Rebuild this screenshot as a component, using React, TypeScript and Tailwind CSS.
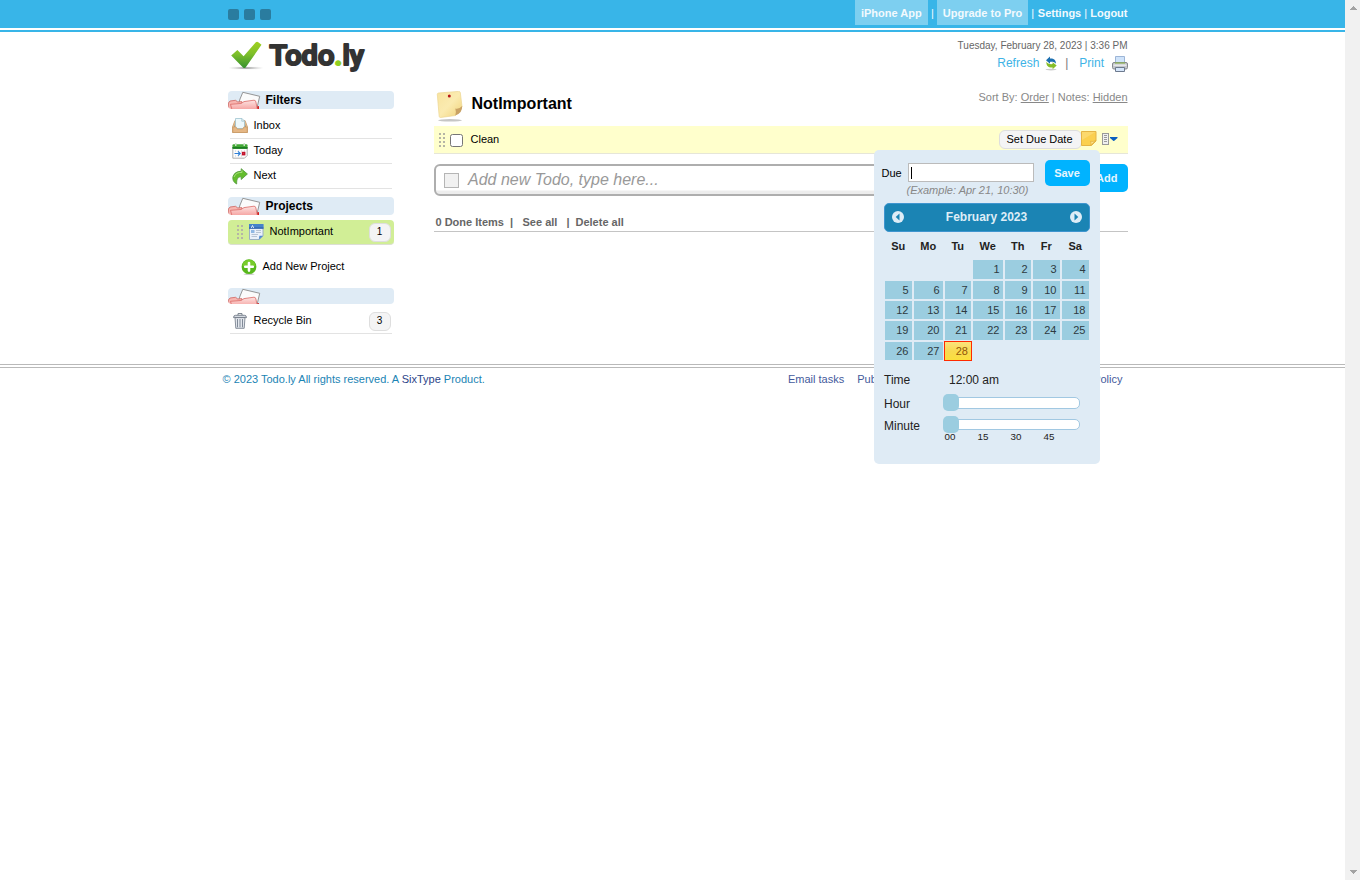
import React from "react";

const FONT = "font-['Liberation_Sans',Arial,sans-serif]";

function Logo() {
  return (
    <svg width="140" height="40" viewBox="0 0 140 40">
      <defs>
        <linearGradient id="chk" x1="0" y1="0" x2="0" y2="1">
          <stop offset="0" stopColor="#a0d01f" />
          <stop offset="0.45" stopColor="#7fc02a" />
          <stop offset="1" stopColor="#35902e" />
        </linearGradient>
        <radialGradient id="shd">
          <stop offset="0" stopColor="#777" />
          <stop offset="1" stopColor="#ddd" stopOpacity="0.2" />
        </radialGradient>
      </defs>
      <ellipse cx="18" cy="28" rx="17" ry="1.6" fill="url(#shd)" />
      <path d="M3.2 15.5 9.4 10l6.200 6.200L27.6 2.400Q29 1.400 30.300 2.200l3.200 2.600L17.800 27.200Q16.400 28.800 15 27.400Z" fill="url(#chk)" />
      <text x="41.500" y="25.400" textLength="94.500" lengthAdjust="spacingAndGlyphs" fontFamily="Roboto" fontWeight="500" fontSize="28" fill="#333" stroke="#333" strokeWidth="2.200" strokeLinejoin="round">
        Todo<tspan fill="#8fd021" stroke="#8fd021">.</tspan>ly
      </text>
    </svg>
  );
}

function Folder({ h }: { h: number }) {
  return (
    <svg width="34" height={h} viewBox={`0 0 34 ${h}`} className="shrink-0">
      <defs>
        <linearGradient id="fold" x1="0" y1="9" x2="0" y2="19" gradientUnits="userSpaceOnUse">
          <stop offset="0" stopColor="#fde6e4" />
          <stop offset="1" stopColor="#f5a09e" />
        </linearGradient>
      </defs>
      <path d="M14.800 1.300 31.700 5.300 28.500 19H9L12 8Z" fill="#fbfbfb" stroke="#8a8a8a" strokeWidth=".9" />
      <path d="M28.200 15.800 31 15v4h-3Z" fill="#d32020" />
      <path d="M.4 19v-7l1.600-2 5.500-.7 2.300 1.700 4-.4v9Z" fill="#f7b5b0" stroke="#cf6560" strokeWidth=".8" />
      <path d="M4 19 2.500 13.300l10.500-.8 3-1.900 10-1.400q1.600 0 1.900 1.800L29.500 19Z" fill="url(#fold)" stroke="#da6a66" strokeWidth=".8" />
    </svg>
  );
}

function Grip() {
  return (
    <svg width="7" height="15" viewBox="0 0 7 15" fill="#b5b5a6" shapeRendering="crispEdges" className="shrink-0">
      {[0, 4, 8, 12].map((y) => (
        <g key={y}>
          <rect x="0" y={y} width="2" height="2" />
          <rect x="4" y={y} width="2" height="2" />
        </g>
      ))}
    </svg>
  );
}

function InboxIcon() {
  return (
    <svg width="16" height="16" viewBox="0 0 16 16">
      <path d="M3 2.500h10l2.500 6.500v5.500H.5V9Z" fill="#e6c296" stroke="#c79a68" strokeWidth=".8" />
      <path d="M3.500 3.500h9L14 9.500H2Z" fill="#a58e70" />
      <path d="M3.500.5H10L12.500 3v7.500h-9Z" fill="#edf8fb" stroke="#9fc4cf" strokeWidth=".8" />
      <path d="M9.800.5V3.200h2.700" fill="none" stroke="#9fc4cf" strokeWidth=".8" />
      <path d="M.8 9h3.400l1 2h5.600l1-2h3.400v5.500H.8Z" fill="#e5b785" stroke="#c2935e" strokeWidth=".6" />
    </svg>
  );
}

function TodayIcon() {
  return (
    <svg width="16" height="16" viewBox="0 0 16 16">
      <path d="M.8 4h14.400v8.500L12.500 15.200H.8Z" fill="#fdfdfd" stroke="#9a9a9a" strokeWidth=".8" />
      <rect x=".5" y="1.300" width="15" height="4.500" rx="1" fill="#42a835" />
      <rect x=".5" y="4" width="15" height="1.800" fill="#1c7d22" />
      <path d="M3 0h1.500v3H3ZM11.500 0H13v3h-1.500Z" fill="#c9dfc7" />
      <path d="M3 8h1M6 8h1M9 8h1M12 8h1M3 13h1M6 13h1M9 13h1" stroke="#ccc" />
      <path d="M2.500 10.500h5.500M6 8.300l2.200 2.200L6 12.700" fill="none" stroke="#2f7fd6" strokeWidth="1.200" />
      <rect x="10.500" y="9.500" width="2.200" height="2.200" fill="#fff" stroke="#c3132c" strokeWidth="1.400" />
    </svg>
  );
}

function NextIcon() {
  return (
    <svg width="16" height="17" viewBox="0 0 16 17">
      <path d="M9.200.7 15.400 6 9.200 11.500V8.800C6.500 8.700 4.300 10.500 4.700 16 1.500 14.500.4 11.500.9 8.800 1.800 5.200 5 3.200 9.200 3.300Z" fill="#64bd2d" stroke="#4f9638" strokeWidth=".8" />
      <path d="M10 2.500v1.900C6.300 4.200 3.300 5.500 2 9" fill="none" stroke="#a8e07c" strokeWidth="1" />
    </svg>
  );
}

function DocIcon() {
  return (
    <svg width="15" height="16" viewBox="0 0 15 16">
      <path d="M.5.5H14V12l-3.500 3.500H.5Z" fill="#eaf1fa" stroke="#94a9c2" strokeWidth=".9" />
      <rect x="0" y="0" width="14.500" height="4.500" fill="#4583cb" />
      <rect x="0" y="3.500" width="14.500" height="1.200" fill="#2c5fa8" />
      <path d="M2.300 4 3.500 1.500 4.700 4" fill="none" stroke="#fff" strokeWidth=".8" />
      <path d="M7 6.500h5M7 8.500h5M2.500 10.500H9M2.500 12.500H8" stroke="#b7c4d4" />
      <rect x="2" y="6" width="3.500" height="3" fill="#8fb8e4" />
      <path d="m9.800 15.500.6-3.800 3.600.1Z" fill="#4a87cc" />
    </svg>
  );
}

function PlusIcon() {
  return (
    <svg width="16" height="16" viewBox="0 0 16 16">
      <ellipse cx="8" cy="15.200" rx="5.500" ry=".8" fill="#ccc" />
      <circle cx="8" cy="7.700" r="7.400" fill="#58b81c" />
      <path d="M1.500 7a6.500 6.300 0 0 1 13 0Q8 9 1.500 7Z" fill="#79cc2b" />
      <path d="M8 4v7.600M4.200 7.800h7.600" stroke="#fff" strokeWidth="2.600" strokeLinecap="round" />
    </svg>
  );
}

function TrashIcon() {
  return (
    <svg width="14" height="16" viewBox="0 0 14 16">
      <path d="M2 4.500h10l-.8 10.800H2.800Z" fill="#e3e7ed" stroke="#6c7684" strokeWidth=".8" />
      <path d="M4.500 6v8.300M7 6v8.300M9.500 6v8.300" stroke="#808a98" strokeWidth="1" />
      <path d="M.5 4.600Q.5 2.300 2.500 2.300h9q2 0 2 2.300Z" fill="#d5dae1" stroke="#67707d" strokeWidth=".8" />
      <path d="M5 2V.6h4V2" fill="none" stroke="#67707d" strokeWidth=".9" />
    </svg>
  );
}

function StickyIcon() {
  return (
    <svg width="28" height="31" viewBox="0 0 28 31">
      <defs>
        <linearGradient id="stk" x1="0" y1="0" x2="1" y2="1">
          <stop offset="0" stopColor="#f8e39f" />
          <stop offset="0.5" stopColor="#fbebb0" />
          <stop offset="1" stopColor="#f0d27a" />
        </linearGradient>
      </defs>
      <ellipse cx="14" cy="29.300" rx="12" ry="1.200" fill="#c6c6c6" />
      <path d="M1.300 3.500Q1.200 2.300 2.500 2L22.500.4Q24 .3 24.300 1.500L26 15.500 19.500 24.500 4.500 26.500Q3.400 26.500 3.200 25.500Z" fill="url(#stk)" stroke="#ecd590" strokeWidth=".7" />
      <path d="M19.300 24.600Q20.500 21 19.300 17.500 23 18.500 26.200 15 26.500 22 19.300 24.600Z" fill="#c9a264" />
      <circle cx="13.300" cy="5" r="1.500" fill="#b81818" />
    </svg>
  );
}

function RefreshIcon() {
  return (
    <svg width="13" height="15" viewBox="0 0 13 15">
      <ellipse cx="6" cy="13.600" rx="5.500" ry=".8" fill="#ccc" />
      <path d="M1 4.200 5 .6v1.900c3.700-.3 6 1.600 6 5.200C9.500 6 8 5.700 5 5.900v1.900Z" fill="#1c6fb0" />
      <path d="M11.700 9.500 7.600 6.200v1.900C4.500 8.400 2.200 7.500 1.500 5.500c-.6 4.200 2 6.300 6.100 6v1.700Z" fill="#86bd27" />
    </svg>
  );
}

function PrintIcon() {
  return (
    <svg width="16" height="16" viewBox="0 0 16 16">
      <path d="M3.500 7.500V.5h9v7Z" fill="#cfe3fa" stroke="#9db5d6" />
      <rect x=".5" y="6.500" width="15" height="6.500" rx="1.500" fill="#c5c7cb" stroke="#85888e" />
      <path d="M3 7h10" stroke="#8db552" strokeWidth="1.200" />
      <path d="M1.500 9.200h13" stroke="#ededf0" strokeWidth="1.300" />
      <path d="M3.500 11.500h9v4h-9Z" fill="#d6e6fa" stroke="#6d7a8e" />
    </svg>
  );
}

function NoteIcon() {
  return (
    <svg width="16" height="15" viewBox="0 0 16 15">
      <path d="M.5.5h14.500v9.500L10.500 14.500H.5Z" fill="#fbd04e" stroke="#e5b545" />
      <path d="M1 1h13.500L1 9Z" fill="#fde28a" opacity=".5" />
      <path d="M9.800 14.300Q10.500 12 9.500 10.200 12 11 14.800 9.500Z" fill="#fde48e" stroke="#e0ae3c" strokeWidth=".7" />
    </svg>
  );
}

function MenuIcon() {
  return (
    <svg width="16" height="13" viewBox="0 0 16 13">
      <rect x=".5" y=".5" width="6" height="11" fill="#f0f0f0" stroke="#999" />
      <path d="M2 2.500h3M2 4.500h3M2 6.500h3M2 8.500h3" stroke="#999" />
      <path d="M8 4h7.500v1L12 8h-.5L8 5Z" fill="#0a5fc0" />
    </svg>
  );
}

function NavCircle({ left }: { left?: boolean }) {
  return (
    <svg width="12" height="12" viewBox="0 0 12 12" className="-mt-px">
      <circle cx="6" cy="6" r="6" fill="#deedf7" />
      <path d={left ? "M7.500 2.500v7L3.700 6Z" : "M4.500 2.500v7L8.300 6Z"} fill="#1b84b4" />
    </svg>
  );
}

function SectionHead({ title, h }: { title?: string; h: 16 | 18 }) {
  return (
    <div className={`flex w-[166px] overflow-hidden rounded-[4px] bg-[#dfebf5] ${h === 16 ? "h-4" : "h-[18px]"}`}>
      <Folder h={h} />
      <span className="ml-[3.5px] text-[12px] leading-[18px] font-bold text-black">{title}</span>
    </div>
  );
}

function Item({ icon, label, count }: { icon: React.ReactNode; label: string; count?: number }) {
  return (
    <div className="ml-0.5 flex h-[25px] w-[162px] border-b border-[#e3e3e3]">
      <span className="mt-1 flex h-4 w-[23.5px] pl-0.5">{icon}</span>
      <span className="leading-[22px]">{label}</span>
      {count !== undefined && <Badge n={count} />}
    </div>
  );
}

function Badge({ n }: { n: number }) {
  return (
    <span className="mt-[3px] ml-auto mr-px h-[19px] w-[22px] rounded-[6px] border border-[#dedede] bg-[#f4f4f5] pr-px text-center text-[10px] leading-[15px]">{n}</span>
  );
}

const DAYS = Array.from({ length: 28 }, (_, i) => i + 1);

function Slider({ short }: { short?: boolean }) {
  return (
    <div className="flex h-[17px] w-[137px]">
      <div className="z-10 h-[17px] w-4 shrink-0 rounded-[5px] bg-[#9bcde0]" />
      <div className={`mt-[3px] -ml-1 flex-1 rounded-r-[5px] border border-[#a1c8e2] bg-white ${short ? "h-[11px]" : "h-3"}`} />
    </div>
  );
}

function DuePopup() {
  return (
    <div className="absolute top-[24px] left-[440px] z-20 h-[314px] w-[226px] rounded-[5px] bg-[#dfebf5] text-[#222]">
      <div className="flex h-[36px] pt-[10px] pl-[7.5px] text-black">
        <span className="w-[26.500px] leading-[27px]">Due</span>
        <div className="mt-[3px] flex h-[19px] w-[126px] items-center border border-[#bbb] bg-white pl-0.5">
          <span className="h-3 w-px bg-black" />
        </div>
        <div className="ml-[11px] h-[26px] w-[45px] rounded-[5px] bg-[#00b3ff] pr-px text-center leading-[26px] font-bold text-[#e6f5fd]">Save</div>
      </div>
      <div className="-mt-[3px] pl-[32.500px] leading-[14px] text-[#888] italic">(Example: Apr 21, 10:30)</div>
      <div className="mt-[6px] ml-[10px] flex h-[29px] w-[206px] items-center justify-between rounded-[5px] border border-[#3f95cf] bg-[#1b84b4] px-[7px] text-[12px] font-bold text-[#deedf7]">
        <NavCircle left />
        <span className="-mt-px pr-px">February 2023</span>
        <NavCircle />
      </div>
      <div className="ml-[11px] grid h-7 grid-cols-[27px_29px_26px_30px_26px_27px_27px] gap-x-0.5 text-center leading-[28px] font-bold">
        {["Su", "Mo", "Tu", "We", "Th", "Fr", "Sa"].map((d) => (
          <span key={d} className="pr-[0.500px]">{d}</span>
        ))}
      </div>
      <div className="ml-[11px] grid grid-cols-[27px_29px_26px_30px_26px_27px_27px] grid-rows-[19px_18px_18px_19px_18px] gap-0.5 text-right leading-[18px] text-[#2e3a40]">
        <span className="col-span-3" />
        {DAYS.map((d) => (
          <span
            key={d}
            className={
              d === 28
                ? "-m-px border border-[#ff2a00] bg-linear-to-b from-[#fbe37d] via-[#f8da50] to-[#fbdf3c] pr-[3px] text-[#915608]"
                : "bg-[#9bcde0] pr-[3.500px]"
            }
          >
            {d}
          </span>
        ))}
      </div>
      <div className="mt-[11px] ml-[10px] grid grid-cols-[59px_1fr] text-[12px]">
        <span className="h-[23px] leading-[18px]">Time</span>
        <span className="pl-[6px] leading-[18px]">12:00 am</span>
        <span className="h-[22px] leading-[20px]">Hour</span>
        <Slider />
        <span className="h-[17px] leading-[20px]">Minute</span>
        <Slider short />
      </div>
      <div className="ml-[70.500px] flex text-[9.800px] leading-[8px]">
        {["00", "15", "30", "45"].map((m) => (
          <span key={m} className="w-[33px]">{m}</span>
        ))}
      </div>
    </div>
  );
}

export default function App() {
  return (
    <div className={`flex h-[880px] w-[1360px] overflow-hidden bg-white text-[11px] text-black ${FONT}`}>
      <div className="w-[1345px]">
        <header className="flex h-7 justify-between bg-[#38b5e8] pr-[217.500px] pl-[228px] font-bold text-[#f2fafe]">
          <div className="flex gap-[5px] pt-[9px]">
            {[0, 1, 2].map((i) => (
              <span key={i} className="size-[11px] rounded-[2px] bg-[#2a7c9f]" />
            ))}
          </div>
          <nav className="flex leading-[26px]">
            <a className="h-[25px] w-[73px] bg-[#7dcff0] text-center">iPhone App</a>
            <span className="w-[9px] text-center font-normal">|</span>
            <a className="h-[25px] w-[91px] bg-[#7dcff0] pl-[6px]">Upgrade to Pro</a>
            <span className="w-[10px] pl-[3.500px] font-normal">|</span>
            <a>Settings</a>
            <span className="w-[9px] text-center font-normal">|</span>
            <a>Logout</a>
          </nav>
        </header>
        <div className="mt-0.5 h-0.5 bg-[#38b5e8]" />

        <div className="flex h-[332px] pl-[228px]">
          <aside className="w-[206px]">
            <div className="h-[59px] pt-[8px]"><Logo /></div>
            <SectionHead title="Filters" h={18} />
            <div className="mt-[5px]">
              <Item icon={<InboxIcon />} label="Inbox" />
              <Item icon={<TodayIcon />} label="Today" />
              <Item icon={<NextIcon />} label="Next" />
            </div>
            <div className="mt-[8px]"><SectionHead title="Projects" h={18} /></div>
            <div className="mt-[5px] flex h-[25px] w-[166px] rounded-[4px] border-b border-[#dcdfd3] bg-[#d1ee96] pl-[9px]">
              <span className="mt-[5px] w-3"><Grip /></span>
              <span className="mt-1 w-[20.500px]"><DocIcon /></span>
              <span className="leading-[22px]">NotImportant</span>
              <span className="mr-0.5 ml-auto flex"><Badge n={1} /></span>
            </div>
            <div className="mt-[14px] flex pl-[13px]">
              <span className="w-[21.500px]"><PlusIcon /></span>
              <span className="leading-[15px]">Add New Project</span>
            </div>
            <div className="mt-[13px]"><SectionHead h={16} /></div>
            <div className="mt-[5px]">
              <Item icon={<span className="pl-px"><TrashIcon /></span>} label="Recycle Bin" count={3} />
            </div>
          </aside>

          <main className="w-[694px]">
            <div className="flex h-[59px] flex-col items-end pt-[7px] text-[#666]">
              <span className="pr-[0.500px] text-[10px] leading-[13px]">Tuesday, February 28, 2023 | 3:36 PM</span>
              <div className="mt-[3px] flex h-[17px] text-[12px] leading-[16px] text-[#3eb3e6]">
                <span>Refresh</span>
                <span className="mt-px ml-[6px]"><RefreshIcon /></span>
                <span className="ml-[7px] w-[14px] text-[#777]">|</span>
                <span>Print</span>
                <span className="mt-px ml-[8px]"><PrintIcon /></span>
              </div>
            </div>
            <div className="flex h-[35px] pl-[2px]">
              <StickyIcon />
              <h1 className="ml-[7.500px] text-[16px] leading-[25px] font-bold">NotImportant</h1>
              <span className="mr-[0.500px] ml-auto leading-[13px] text-[#888]">
                Sort By: <u>Order</u> | Notes: <u>Hidden</u>
              </span>
            </div>
            <div className="relative flex h-7 border-b border-[#e6e6d8] bg-[#ffffcc] pl-[5px]">
              <span className="mt-[7px]"><Grip /></span>
              <span className="mt-[8px] ml-1 size-[13px] rounded-[2.500px] border border-[#767676] bg-white" />
              <span className="ml-[7.500px] leading-[26px]">Clean</span>
              <span className="mt-1 ml-auto h-[19px] w-[83px] rounded-[6px] border border-[#dedede] bg-[#f4f4f5] pl-[6.500px] leading-[16px]">Set Due Date</span>
              <span className="mt-[5px] -ml-px"><NoteIcon /></span>
              <span className="mt-[7px] mr-[10px] ml-[5px]"><MenuIcon /></span>
              <DuePopup />
            </div>
            <div className="mt-[10px] flex h-8">
              <div className="flex h-8 w-[640px] items-center rounded-l-[6px] border-2 border-[#aeaeae] bg-linear-to-b from-white from-85% to-[#ededed] to-90% pl-2">
                <span className="size-[15px] border border-[#b5b5b5] bg-[#f1f1f1]" />
                <span className="ml-[9px] text-[16px] text-[#999] italic">Add new Todo, type here...</span>
              </div>
              <div className="h-7 flex-1 rounded-[5px] bg-[#00b3ff] pr-[10.500px] text-right leading-[29px] font-bold text-[#e6f5fd]">Add</div>
            </div>
            <div className="mt-[20px] flex h-4 border-b border-[#c4c4c4] pl-[1.500px] leading-[13px] font-bold text-[#666]">
              <span className="w-[74.500px]">0 Done Items</span>
              <span className="w-[12.500px]">|</span>
              <span className="w-[44px]">See all</span>
              <span className="w-[9px]">|</span>
              <span>Delete all</span>
            </div>
          </main>
        </div>

        <footer className="h-1 border-y border-[#b9b9b9]" />
        <div className="flex pl-[222.500px] leading-[13px] text-[#445a9c]">
          <span className="mt-[5px] w-[565.500px] text-[#1b84b4]">
            © 2023 Todo.ly All rights reserved. A <span className="text-[#2a4488]">SixType</span> Product.
          </span>
          <div className="mt-[5px] flex w-[334.500px]">
            <span>Email tasks</span>
            <span className="ml-[13px]">Public</span>
            <span className="ml-auto">Policy</span>
          </div>
        </div>
      </div>

      <div className="flex w-[15px] flex-col items-center justify-between bg-[#f1f1f1] py-[6px]">
        <svg width="8" height="4" viewBox="0 0 8 4" shapeRendering="crispEdges"><path d="M4 0 8 4H0Z" fill="#a3a3a3" /></svg>
        <svg width="8" height="4" viewBox="0 0 8 4" shapeRendering="crispEdges"><path d="M4 4 8 0H0Z" fill="#a3a3a3" /></svg>
      </div>
    </div>
  );
}
